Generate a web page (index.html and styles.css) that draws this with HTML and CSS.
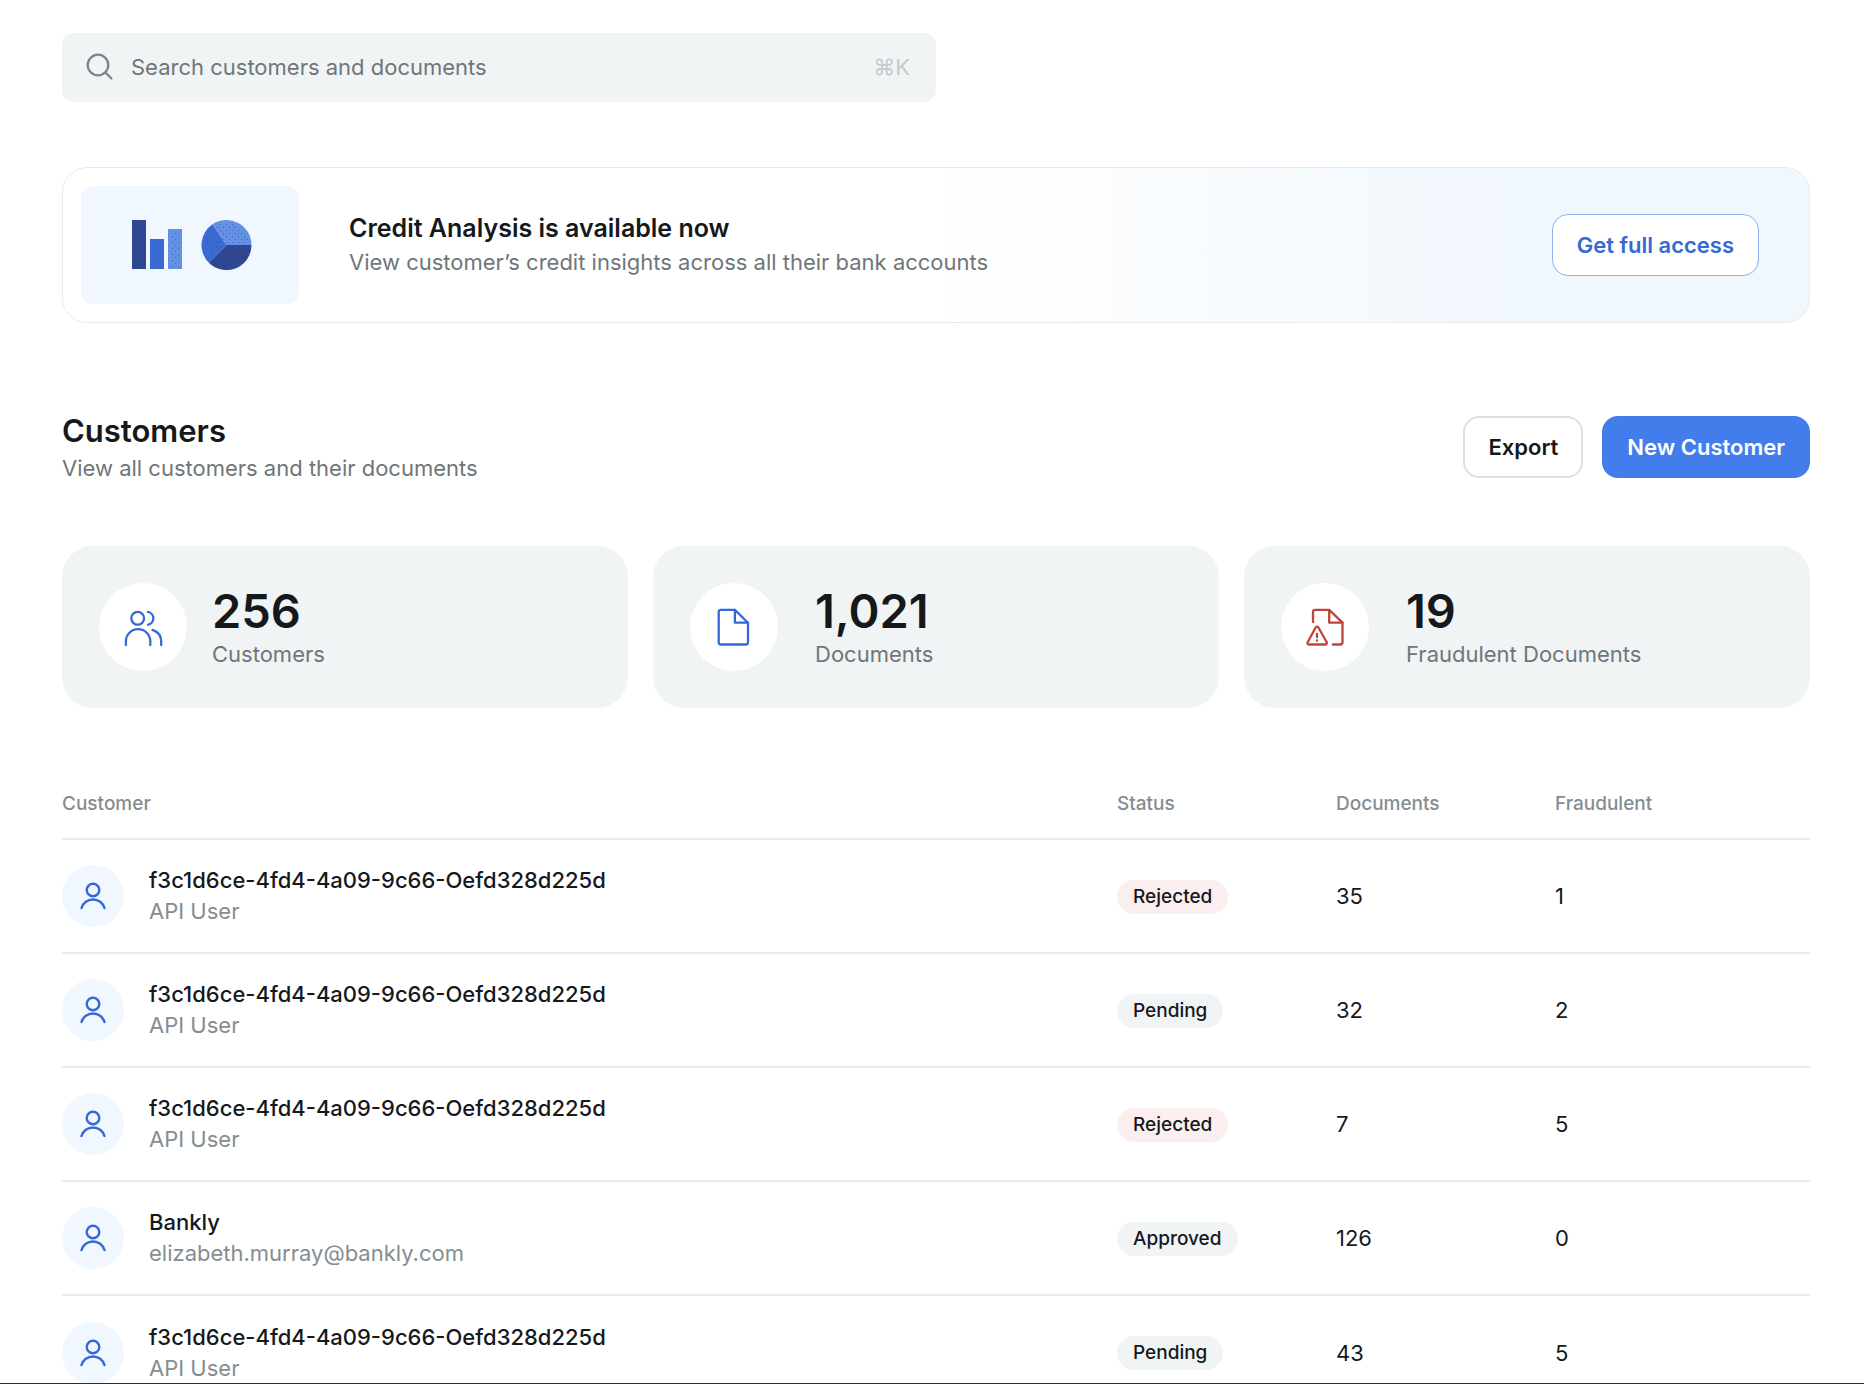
FILE: index.html
```
<!DOCTYPE html>
<html lang="en">
<head>
<meta charset="UTF-8" />
<meta name="viewport" content="width=device-width, initial-scale=1.0"/>
<title>Customers</title>
<link rel="stylesheet" href="styles.css">
</head>
<body>

<!-- Shared icons -->
<svg class="sprite" aria-hidden="true">
  <symbol id="icon-user" viewBox="0 0 32 32">
    <circle cx="16" cy="10" r="6.3"/>
    <path d="M4.5 28a12 12 0 0 1 23 0"/>
  </symbol>
</svg>

<main class="page">
  <!-- Search -->
  <form class="search" role="search">
    <svg class="search-icon" viewBox="0 0 28 28" aria-hidden="true">
      <circle cx="12" cy="12" r="10.3"/>
      <path d="M19.5 19.5l6 6"/>
    </svg>
    <input class="search-input" type="search" placeholder="Search customers and documents" aria-label="Search customers and documents"/>
    <kbd class="search-key">⌘K</kbd>
  </form>

  <!-- Credit analysis banner -->
  <section class="banner">
    <div class="banner-art">
      <svg width="120" height="50" viewBox="0 0 120 50" aria-hidden="true">
        <defs>
          <pattern id="dots" width="6" height="6" patternUnits="userSpaceOnUse">
            <circle cx="1.5" cy="1.5" r="0.7" fill="#3b6ad3"/>
            <circle cx="4.5" cy="4.5" r="0.7" fill="#3b6ad3"/>
          </pattern>
        </defs>
        <rect x="0" y="0" width="14" height="49" fill="#2e4790"/>
        <rect x="18" y="19" width="14" height="30" fill="#3b69d2"/>
        <rect x="36" y="9" width="14" height="40" fill="#6591e3"/>
        <rect x="39" y="12" width="9" height="36" fill="url(#dots)"/>
        <path d="M94.500 25H119.500A25 25 0 0 1 76.800 42.700z" fill="#2e4790"/>
        <path d="M94.500 25L76.800 42.700A25 25 0 0 1 80.500 4.300z" fill="#3b69d2"/>
        <path d="M94.500 25L80.500 4.300A25 25 0 0 1 119.500 25z" fill="#6591e3"/>
        <path d="M94.500 25L83 7A22 22 0 0 1 117 25z" fill="url(#dots)"/>
        <g fill="#2e4790">
          <circle cx="75" cy="23" r="0.6"/><circle cx="81" cy="19" r="0.6"/>
          <circle cx="79" cy="25" r="0.6"/><circle cx="85" cy="27" r="0.6"/>
          <circle cx="81" cy="30" r="0.6"/><circle cx="86" cy="22" r="0.6"/>
        </g>
      </svg>
    </div>
    <div class="banner-text">
      <h2 class="banner-title">Credit Analysis is available now</h2>
      <p class="muted">View customer’s credit insights across all their bank accounts</p>
    </div>
    <button class="btn btn-outline" type="button">Get full access</button>
  </section>

  <!-- Page heading -->
  <header class="heading">
    <div>
      <h1 class="heading-title">Customers</h1>
      <p class="muted">View all customers and their documents</p>
    </div>
    <div class="actions">
      <button class="btn" type="button">Export</button>
      <button class="btn btn-primary" type="button">New Customer</button>
    </div>
  </header>

  <!-- Totals -->
  <section class="stats">
    <div class="stat stat-tight">
      <span class="stat-icon">
        <svg viewBox="0 0 40 40" aria-hidden="true">
          <circle cx="14.700" cy="11.300" r="6.400"/>
          <path d="M2.900 38v-3.600a12.200 12.200 0 0 1 24.400 0V38"/>
          <path d="M25 4.900a6.500 6.500 0 0 1 0 12.800"/>
          <path d="M29.500 22.900c5.300 1.800 8.700 6.300 8.700 11.600V38"/>
        </svg>
      </span>
      <div>
        <p class="stat-value">256</p>
        <p class="muted">Customers</p>
      </div>
    </div>
    <div class="stat">
      <span class="stat-icon">
        <svg viewBox="0 0 40 40" aria-hidden="true">
          <path d="M20.900 2.900H6.900a2.200 2.200 0 0 0-2.200 2.200v30.200a2.200 2.200 0 0 0 2.200 2.200h24.900a2.200 2.200 0 0 0 2.200-2.200V15.700z"/>
          <path d="M20.900 2.900v12.800H34"/>
        </svg>
      </span>
      <div>
        <p class="stat-value">1,021</p>
        <p class="muted">Documents</p>
      </div>
    </div>
    <div class="stat">
      <span class="stat-icon stat-icon-alert">
        <svg viewBox="0 0 40 40" aria-hidden="true">
          <path d="M8 15V5.100a2.200 2.200 0 0 1 2.200-2.200H24.200L37.500 15.700v19.600a2.200 2.200 0 0 1-2.200 2.200h-7.500"/>
          <path d="M24.200 2.900v12.800h13.300"/>
          <path d="M10.600 20.500L2.700 35.200a1.500 1.500 0 0 0 1.300 2.300h16.400a1.500 1.500 0 0 0 1.300-2.300L13.500 20.500a1.600 1.600 0 0 0-2.900 0z"/>
          <path d="M12 27v3.200M12 33.500v0.200"/>
        </svg>
      </span>
      <div>
        <p class="stat-value">19</p>
        <p class="muted">Fraudulent Documents</p>
      </div>
    </div>
  </section>

  <!-- Customer list -->
  <table class="customers">
    <colgroup>
      <col/>
      <col class="col-status"/>
      <col class="col-documents"/>
      <col class="col-fraudulent"/>
    </colgroup>
    <thead>
      <tr>
        <th scope="col">Customer</th>
        <th scope="col">Status</th>
        <th scope="col">Documents</th>
        <th scope="col">Fraudulent</th>
      </tr>
    </thead>
    <tbody>
      <tr>
        <td>
          <div class="customer">
            <span class="avatar"><svg aria-hidden="true"><use href="#icon-user"/></svg></span>
            <div>
              <p class="customer-name">f3c1d6ce-4fd4-4a09-9c66-Oefd328d225d</p>
              <p class="customer-info">API User</p>
            </div>
          </div>
        </td>
        <td><span class="badge badge-rejected">Rejected</span></td>
        <td>35</td>
        <td>1</td>
      </tr>
      <tr>
        <td>
          <div class="customer">
            <span class="avatar"><svg aria-hidden="true"><use href="#icon-user"/></svg></span>
            <div>
              <p class="customer-name">f3c1d6ce-4fd4-4a09-9c66-Oefd328d225d</p>
              <p class="customer-info">API User</p>
            </div>
          </div>
        </td>
        <td><span class="badge">Pending</span></td>
        <td>32</td>
        <td>2</td>
      </tr>
      <tr>
        <td>
          <div class="customer">
            <span class="avatar"><svg aria-hidden="true"><use href="#icon-user"/></svg></span>
            <div>
              <p class="customer-name">f3c1d6ce-4fd4-4a09-9c66-Oefd328d225d</p>
              <p class="customer-info">API User</p>
            </div>
          </div>
        </td>
        <td><span class="badge badge-rejected">Rejected</span></td>
        <td>7</td>
        <td>5</td>
      </tr>
      <tr>
        <td>
          <div class="customer">
            <span class="avatar"><svg aria-hidden="true"><use href="#icon-user"/></svg></span>
            <div>
              <p class="customer-name">Bankly</p>
              <p class="customer-info">elizabeth.murray@bankly.com</p>
            </div>
          </div>
        </td>
        <td><span class="badge">Approved</span></td>
        <td>126</td>
        <td>0</td>
      </tr>
      <tr>
        <td>
          <div class="customer">
            <span class="avatar"><svg aria-hidden="true"><use href="#icon-user"/></svg></span>
            <div>
              <p class="customer-name">f3c1d6ce-4fd4-4a09-9c66-Oefd328d225d</p>
              <p class="customer-info">API User</p>
            </div>
          </div>
        </td>
        <td><span class="badge">Pending</span></td>
        <td>43</td>
        <td>5</td>
      </tr>
    </tbody>
  </table>
</main>

</body>
</html>
```
FILE: styles.css
```
* {
  box-sizing: border-box;
}

body, h1, h2, p {
  margin: 0;
}

body {
  font-family: Inter, "Liberation Sans", sans-serif;
  font-size: 22px;
  line-height: 32px;
  color: #15191c;
  background: #fff;
}

.sprite {
  display: none;
}

.page {
  height: 100vh;
  padding: 33px 54px 0 62px;
  overflow: hidden;
  border-bottom: 1px solid #2b2d2f;
}

.muted {
  color: #6f767a;
}

svg {
  fill: none;
  stroke-linecap: round;
  stroke-linejoin: round;
}

/* Search */
.search {
  display: flex;
  align-items: center;
  gap: 17px;
  width: 50%;
  height: 69px;
  padding: 0 26px 2px 24px;
  background: #f0f4f5;
  border-radius: 12px;
}

.search-icon {
  width: 28px;
  height: 28px;
  stroke: #7c8489;
  stroke-width: 2.3;
}

.search-input {
  flex: 1;
  min-width: 0;
  padding: 0;
  border: none;
  outline: none;
  background: none;
  font: inherit;
  color: inherit;
}

.search-input::placeholder {
  color: #6f767a;
  opacity: 1;
}

.search-key {
  font: inherit;
  color: #c5cacc;
}

/* Buttons */
.btn {
  height: 62px;
  padding: 0 23px;
  border: 2px solid #dde1e6;
  border-radius: 16px;
  background: #fff;
  font: inherit;
  font-weight: 600;
  color: #15191c;
  white-space: nowrap;
  cursor: pointer;
}

.btn-outline {
  padding: 0 24px;
  border: 1px solid #8fb1ee;
  color: #3568d4;
}

.btn-primary {
  border-color: #427deb;
  background: #427deb;
  color: #fff;
}

/* Banner */
.banner {
  display: flex;
  align-items: center;
  gap: 50px;
  margin-top: 65px;
  padding: 18px 50px 18px 18px;
  border: 1px solid #e6ecee;
  border-radius: 25px;
  background: linear-gradient(90deg, #fff 50%, #f0f7fd 84%);
}

.banner-art {
  display: flex;
  align-items: center;
  justify-content: center;
  width: 218px;
  height: 118px;
  padding-left: 4px;
  border-radius: 12px;
  background: #f0f7fe;
}

.banner-text {
  flex: 1;
  padding-bottom: 3px;
}

.banner-title {
  font-size: 25px;
  line-height: 36px;
  font-weight: 600;
}

/* Heading */
.heading {
  display: flex;
  align-items: center;
  justify-content: space-between;
  margin-top: 87px;
}

.heading-title {
  font-size: 31px;
  line-height: 42px;
  font-weight: 600;
}

.actions {
  display: flex;
  gap: 19px;
}

/* Totals */
.stats {
  display: grid;
  grid-template-columns: repeat(3, 1fr);
  gap: 25px;
  margin-top: 62px;
}

.stat {
  display: flex;
  align-items: center;
  gap: 37px;
  padding: 37px;
  border-radius: 31px;
  background: #f0f4f5;
}

.stat-tight {
  gap: 25px;
}

.stat-icon {
  display: flex;
  align-items: center;
  justify-content: center;
  width: 88px;
  height: 88px;
  border-radius: 50%;
  background: #fff;
}

.stat-icon svg {
  width: 40px;
  height: 40px;
  stroke: #3568d9;
  stroke-width: 2.3;
}

.stat-icon-alert svg {
  stroke: #c0433c;
}

.stat-value {
  font-size: 47px;
  line-height: 54px;
  font-weight: 600;
}

/* Customer list */
.customers {
  width: 100%;
  margin-top: 61px;
  border-collapse: collapse;
  table-layout: fixed;
}

.col-status, .col-documents {
  width: 219px;
}

.col-fraudulent {
  width: 255px;
}

.customers th {
  height: 70px;
  padding: 0;
  font-size: 19px;
  font-weight: 500;
  text-align: left;
  color: #858d91;
}

.customers td {
  height: 114px;
  padding: 0;
  border-top: 2px solid #e9eced;
}

.customer {
  display: flex;
  align-items: center;
  gap: 25px;
  line-height: 31px;
}

.avatar {
  display: flex;
  align-items: center;
  justify-content: center;
  width: 62px;
  height: 62px;
  border-radius: 50%;
  background: #f0f7fe;
}

.avatar svg {
  width: 32px;
  height: 32px;
  stroke: #3568d9;
  stroke-width: 2.4;
}

.customer-name {
  font-weight: 500;
}

.customer-info {
  color: #858d91;
}

.badge {
  display: inline-block;
  padding: 0 16px;
  border-radius: 17px;
  background: #f0f4f5;
  font-size: 19px;
  line-height: 34px;
  font-weight: 500;
}

.badge-rejected {
  background: #fbeeef;
}
```
